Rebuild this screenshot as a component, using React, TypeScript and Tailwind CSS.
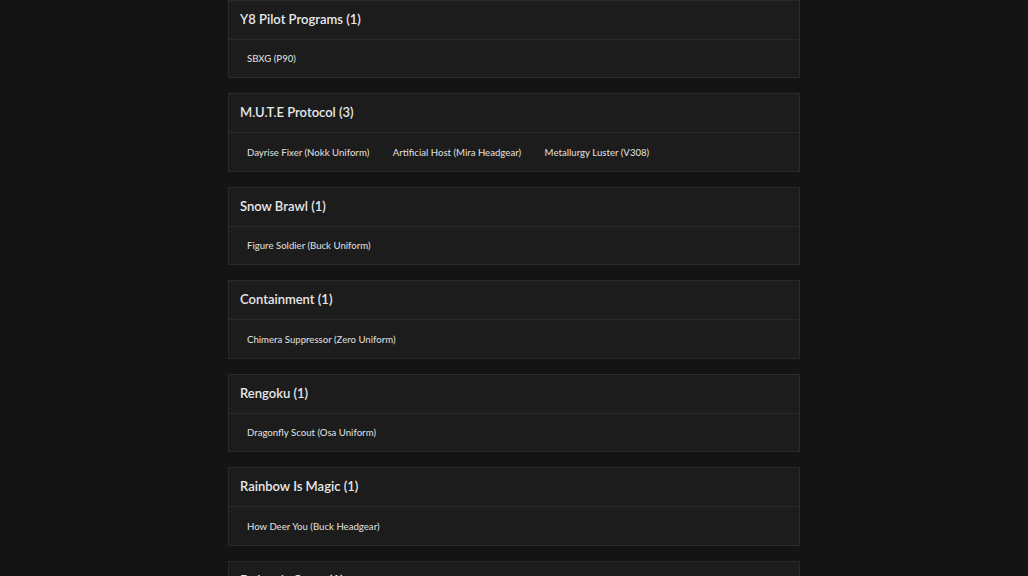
import React from 'react';

type Group = {
  title: string;
  items: string[];
};

const groups: Group[] = [
  { title: 'Y8 Pilot Programs', items: ['SBXG (P90)'] },
  {
    title: 'M.U.T.E Protocol',
    items: ['Dayrise Fixer (Nokk Uniform)', 'Artificial Host (Mira Headgear)', 'Metallurgy Luster (V308)']
  },
  { title: 'Snow Brawl', items: ['Figure Soldier (Buck Uniform)'] },
  { title: 'Containment', items: ['Chimera Suppressor (Zero Uniform)'] },
  { title: 'Rengoku', items: ['Dragonfly Scout (Osa Uniform)'] },
  { title: 'Rainbow Is Magic', items: ['How Deer You (Buck Headgear)'] },
  { title: 'Doktor\'s Curse', items: ['Wicked Pumpkin (Smoke Headgear)'] }
];

function GroupCard({ group }: { group: Group }) {
  return (
    <div className="border border-[#2a2a2a] bg-[#1c1c1c]">
      <div className="h-[39px] flex items-center px-[11px] border-b border-[#2a2a2a]">
        <h2 className="text-[13px] font-semibold text-[#e8e8e8]">
          {group.title} ({group.items.length})
        </h2>
      </div>
      <div className="h-[37.5px] flex items-center gap-[23.5px] pl-[18px] pt-[2px]">
        {group.items.map((item) => (
          <span key={item} className="text-[9.6px] font-medium text-[#dadada]">
            {item}
          </span>
        ))}
      </div>
    </div>
  );
}

export default function App() {
  return (
    <div
      className="min-h-screen bg-[#141414] overflow-hidden"
      style={{ fontFamily: 'Lato, "Open Sans", sans-serif' }}
    >
      <div className="w-[572px] mx-auto flex flex-col gap-[15px] -mt-[0.5px]">
        {groups.map((g) => (
          <GroupCard key={g.title} group={g} />
        ))}
      </div>
    </div>
  );
}
